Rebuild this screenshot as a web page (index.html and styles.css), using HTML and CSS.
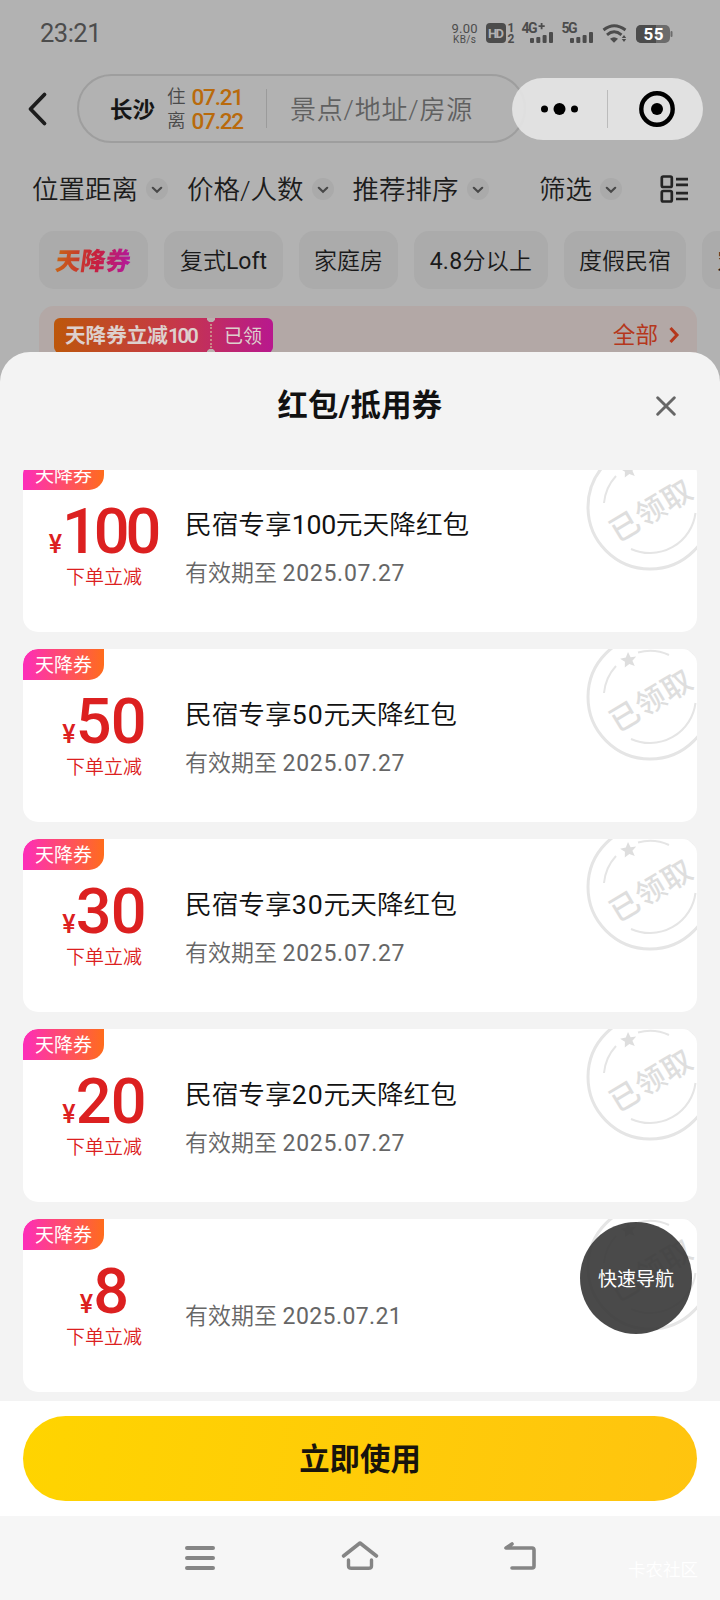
FILE: index.html
```
<!DOCTYPE html>
<html lang="zh-CN">
<head>
<meta charset="utf-8">
<title>红包/抵用券</title>
<link rel="stylesheet" href="styles.css">
</head>
<body>
<svg class="defs" width="0" height="0" aria-hidden="true">
  <symbol id="down" viewBox="0 0 22 22"><circle cx="11" cy="11" r="11" fill="#aaa"/><path d="M6.800 9.800l4.200 3.900 4.200-3.900" fill="none" stroke="#484848" stroke-width="2.200" stroke-linecap="round"/></symbol>
  <symbol id="stamp" viewBox="0 0 128 128">
    <circle cx="64" cy="64" r="62" fill="none" stroke="#e5e5e5" stroke-width="3"/>
    <g fill="none" stroke="#e5e5e5" stroke-width="2">
      <path d="M18 60A46 46 0 0 1 30 33"/><path d="M52 19.500A46 46 0 0 1 83 22"/><path d="M109.500 70A46 46 0 0 1 45 106"/>
    </g>
    <path transform="translate(.5 .5)" d="M41.500 18.500l2.600 5.200 5.600-.7-3.800 4.300 2.400 5.200-5.500-2-4.500 3.600.1-5.800-4.800-3.100 5.700-1.300z" fill="#dedede"/>
    <text class="stamp-text" transform="translate(65 67.500) rotate(-31)" y="10.500" text-anchor="middle">已领取</text>
  </symbol>
</svg>
<div class="phone">
  <header class="status">
    <span class="clock">23:21</span>
    <svg class="status-icons" viewBox="450 18 230 30">
      <g fill="#4c4c4c">
        <text x="451.500" y="32.500" class="net" textLength="26">9.00</text>
        <text x="453" y="42.500" class="unit" textLength="23">KB/s</text>
        <rect x="486" y="23" width="20" height="20" rx="4"/>
        <text x="488" y="38.200" class="hd" textLength="16">HD</text>
        <text x="507.500" y="32" class="sim">1</text><text x="507.500" y="43" class="sim">2</text>
        <text x="521.500" y="33" class="gen" textLength="16">4G</text>
        <path d="M538.500 25.200h2.200v-2.200h1.800v2.200h2.200v1.800h-2.200v2.200h-1.800v-2.200h-2.200z"/>
        <text x="561.500" y="33" class="gen" textLength="16">5G</text>
        <g id="bars"><rect x="530" y="38" width="4" height="5" rx="1"/><rect x="536.300" y="37" width="4" height="6" rx="1"/><rect x="542.600" y="35" width="4" height="8" rx="1"/><rect x="549" y="32" width="4" height="11" rx="1"/></g>
        <use href="#bars" x="40"/>
        <path d="M610 38.800q4-3 8 0l-4 4z"/>
        <path d="M624 35l2.200 3h-4.400zM624 42l2.200-3h-4.400z"/>
      </g>
      <g fill="none" stroke="#4c4c4c" stroke-width="2.900"><path d="M603.500 30q10.500-8.500 22 0"/><path d="M607 34.800q7-6 14.500 0"/></g>
      <rect x="636" y="25" width="34" height="18" rx="5" fill="#6c6c6c"/>
      <path d="M641 25h15v18h-15a5 5 0 0 1-5-5v-8a5 5 0 0 1 5-5z" fill="#4c4c4c"/>
      <rect x="670.500" y="31" width="2" height="6" rx="1" fill="#6c6c6c"/>
      <text x="643.500" y="40" class="batt" fill="#fff" textLength="20">55</text>
    </svg>
  </header>
  <div class="search-row">
    <svg class="back" viewBox="0 0 24 36"><path d="M18.500 3.500L4.500 18l14 14.500" fill="none" stroke="#1d1d1d" stroke-width="3.800" stroke-linecap="round" stroke-linejoin="round"/></svg>
    <div class="search">
      <b class="city">长沙</b>
      <div class="dates"><div>住<span>07.21</span></div><div>离<span>07.22</span></div></div>
      <div class="placeholder">景点/地址/房源</div>
    </div>
    <div class="capsule">
      <svg viewBox="0 0 191 62"><circle cx="32.500" cy="31" r="3.500"/><circle cx="47.500" cy="31" r="6"/><circle cx="62.500" cy="31" r="3.500"/><path d="M95.500 12v38" stroke="#bbb"/><circle cx="145" cy="31" r="15.700" fill="none" stroke="#000" stroke-width="4.400"/><circle cx="145" cy="31" r="6"/></svg>
    </div>
  </div>
  <nav class="filters">
    <div><span>位置距离</span><svg><use href="#down"/></svg></div>
    <div><span>价格/人数</span><svg><use href="#down"/></svg></div>
    <div><span>推荐排序</span><svg><use href="#down"/></svg></div>
    <div class="push"><span>筛选</span><svg><use href="#down"/></svg></div>
    <svg class="view" viewBox="0 0 28 28"><g fill="none" stroke="#252525" stroke-width="2.700"><rect x="1.800" y="1.500" width="10" height="10.500" rx="1.500"/><rect x="1.800" y="16" width="10" height="10.500" rx="1.500"/><path d="M16 4.200H28M16 9.800H28M16 18.200H28M16 24H28"/></g></svg>
  </nav>
  <div class="chips">
    <div class="chip sky"><b>天降券</b></div><div class="chip c2"><span>复式<em>Loft</em></span></div><div class="chip c3">家庭房</div><div class="chip c4"><span><em>4.8</em>分以上</span></div><div class="chip c5">度假民宿</div><div class="chip c6">宠物友好</div>
  </div>
  <div class="banner">
    <div class="ticket"><b>天降券立减<em>100</em></b><span>已领</span></div>
    <div class="all">全部<svg viewBox="0 0 12 18"><path d="M2.500 2l6.500 7-6.500 7" fill="none" stroke="#b5371c" stroke-width="3"/></svg></div>
  </div>
  <section class="sheet">
    <div class="sheet-head"><h1>红包/抵用券</h1><svg viewBox="0 0 20 20"><path d="M1.700 1.700l16.600 16.600M18.300 1.700L1.700 18.300" stroke="#666" stroke-width="2.900" stroke-linecap="round"/></svg></div>
    <div class="list">
      <article class="coupon"><span class="tag">天降券</span><div class="value"><p class="wide"><i>¥</i>100</p><small>下单立减</small></div><div class="info"><h2>民宿专享<em class="tight">100</em>元天降红包</h2><p>有效期至 <span>2025.07.27</span></p></div><svg class="stamp"><use href="#stamp"/></svg></article>
      <article class="coupon"><span class="tag">天降券</span><div class="value"><p><i>¥</i>50</p><small>下单立减</small></div><div class="info"><h2>民宿专享<em>50</em>元天降红包</h2><p>有效期至 <span>2025.07.27</span></p></div><svg class="stamp"><use href="#stamp"/></svg></article>
      <article class="coupon"><span class="tag">天降券</span><div class="value"><p><i>¥</i>30</p><small>下单立减</small></div><div class="info"><h2>民宿专享<em>30</em>元天降红包</h2><p>有效期至 <span>2025.07.27</span></p></div><svg class="stamp"><use href="#stamp"/></svg></article>
      <article class="coupon"><span class="tag">天降券</span><div class="value"><p><i>¥</i>20</p><small>下单立减</small></div><div class="info"><h2>民宿专享<em>20</em>元天降红包</h2><p>有效期至 <span>2025.07.27</span></p></div><svg class="stamp"><use href="#stamp"/></svg></article>
      <article class="coupon"><span class="tag">天降券</span><div class="value"><p><i>¥</i>8</p><small>下单立减</small></div><div class="info solo"><p>有效期至 <span class="tight">2025.07.21</span></p></div><svg class="stamp"><use href="#stamp"/></svg></article>
    </div>
    <div class="action"><button>立即使用</button></div>
    <div class="quick">快速导航</div>
  </section>
  <footer class="system">
    <svg viewBox="180 1536 360 42"><g fill="none" stroke="#858585" stroke-width="4" stroke-linecap="round" stroke-linejoin="round"><path d="M187 1548h26M187 1558h26M187 1568h26"/><path stroke-width="3.600" d="M343.500 1556l16.500-13 16.500 13"/><path stroke-width="3.400" d="M348.500 1560v6q0 2.300 3 2.300h17q3 0 3-2.300v-6"/><path stroke-width="3.600" d="M512 1544l-6 4h26q2 0 2 2v16q0 2-2 2h-20"/></g></svg>
    <span class="mark">卡农社区</span>
  </footer>
</div>
</body>
</html>
```
FILE: styles.css
```
* { box-sizing: border-box; }
body { margin: 0; font-family: Roboto, "Noto Sans CJK SC", sans-serif; font-weight: 350; }
h1, h2, p { margin: 0; }
em { font-style: normal; }
.defs { position: absolute; }
.phone { position: relative; display: flex; flex-direction: column; width: 720px; height: 1600px; overflow: hidden; background: #b2b2b2; }

.status { flex: none; height: 66px; display: flex; justify-content: space-between; padding: 18px 40px 0 40px; }
.clock { font-size: 25.5px; line-height: 30px; font-weight: 400; letter-spacing: -.5px; color: #4c4c4c; }
.status-icons { width: 230px; height: 30px; }
.net { font: 400 13px Roboto; }
.unit { font: 400 10px Roboto; }
.hd { font: 700 13px Roboto; fill: #b2b2b2; }
.sim { font: 700 12px Roboto; }
.gen { font: 700 14px Roboto; }
.batt { font: 700 17px Roboto; }

.search-row { position: relative; flex: none; height: 84px; display: flex; align-items: flex-start; padding: 8px 0 0 26px; }
.back { width: 24px; height: 36px; margin: 17px 27px 0 0; }
.search { width: 449px; height: 69px; border: 2px solid #9e9e9e; border-radius: 35px; display: flex; align-items: center; padding-left: 31px; }
.city { font-size: 22.5px; font-weight: 700; color: #161616; width: 57px; margin-top: -2px; }
.dates { width: 100px; height: 39px; border-right: 1.5px solid #9b9b9b; display: flex; flex-direction: column; justify-content: center; font-size: 18.5px; line-height: 24px; color: #4a4a4a; }
.dates div { display: flex; height: 24px; align-items: center; padding-top: 1px; }
.dates span { margin-left: 6px; color: #b96a0c; font-size: 22.5px; font-weight: 500; letter-spacing: -1.200px; }
.placeholder { margin: -2px 0 0 23px; font-size: 26px; letter-spacing: .8px; color: #606060; }
.capsule { position: absolute; left: 512px; top: 12px; width: 191px; height: 62px; border-radius: 31px; background: rgba(230,230,230,.9); }
.capsule svg { display: block; width: 191px; height: 62px; }

.filters { flex: none; height: 78px; display: flex; align-items: center; padding: 0 32px 0 32px; font-size: 26.5px; color: #1c1c1c; }
.filters div { display: flex; align-items: center; margin-right: 19px; white-space: nowrap; }
.filters div span { margin-top: -4px; }
.filters div svg { width: 22px; height: 22px; margin-left: 8px; }
.filters .push { margin: 0 38px 0 auto; }
.filters .view { width: 28px; height: 28px; }

.chips { flex: none; height: 58px; margin-top: 3px; display: flex; gap: 16px; padding-left: 39px; font-size: 23px; color: #1a1a1a; }
.chip { flex: none; height: 58px; padding-bottom: 3px; border-radius: 15px; background: #ababab; display: flex; align-items: center; justify-content: center; white-space: nowrap; }
.chip em { font-weight: 400; }
.sky { width: 109px; }
.sky b { margin-left: 3px; padding-right: 3px; font-size: 25px; font-weight: 900; transform: skewX(-8deg); background: linear-gradient(90deg, #c86414, #c8203c 50%, #b018a8); -webkit-background-clip: text; background-clip: text; color: transparent; }
.c2 { width: 119px; } .c3 { width: 99px; } .c4 { width: 134px; letter-spacing: .3px; } .c5 { width: 122px; }
.c6 { width: 122px; justify-content: flex-start; padding-left: 15px; }

.banner { flex: none; height: 80px; margin: 17px 23px 0 39px; border-radius: 15px; background: #b3a8a6; display: flex; justify-content: space-between; padding: 12px 17px 0 15px; }
.ticket { width: 219px; height: 35px; border-radius: 6px; display: flex; align-items: center; color: #ddd0cd; background: radial-gradient(circle at 157px 0, #bbb0ae 4px, transparent 4.5px), radial-gradient(circle at 157px 35px, #bbb0ae 4px, transparent 4.5px), linear-gradient(90deg, #bd570b, #c63848 55%, #b8188e); }
.ticket b { width: 158px; height: 24px; line-height: 24px; padding-left: 11px; border-right: 2px dotted #c88; font-size: 20.6px; font-weight: 700; white-space: nowrap; }
.ticket em { font-weight: 600; letter-spacing: -2.300px; }
.ticket span { margin: -2px 0 0 12px; font-size: 19px; font-weight: 400; }
.all { height: 31px; display: flex; align-items: center; font-size: 22.6px; font-weight: 400; color: #b5371c; }
.all svg { width: 12px; height: 18px; margin: 3px 0 0 10px; }

.sheet { position: absolute; left: 0; right: 0; top: 352px; height: 1164px; border-radius: 30px 30px 0 0; background: #f3f3f3; overflow: hidden; }
.sheet-head { height: 118px; display: grid; grid-template-columns: 1fr auto 1fr; padding-top: 34px; }
h1 { grid-column: 2; font-size: 30.3px; line-height: 40px; letter-spacing: .4px; font-weight: 700; color: #111; }
.sheet-head svg { width: 20px; height: 20px; justify-self: end; margin: 10px 44px 0 0; }
.list { height: 931px; overflow: hidden; padding: 0 23px; }
.coupon { position: relative; display: flex; height: 173px; margin-bottom: 17px; border-radius: 15px; background: #fff; overflow: hidden; }
.coupon:first-child { margin-top: -11px; }
.tag { position: absolute; left: 0; top: 0; width: 81px; height: 31px; line-height: 33px; padding-left: 12px; border-radius: 15px 0 15px 0; background: linear-gradient(90deg, #fd2dba, #ff6c1c); color: #fff; font-size: 19px; font-weight: 400; }
.value { width: 162px; padding-top: 40px; text-align: center; color: #dc2020; }
.value p { height: 66px; line-height: 66px; font-size: 63px; font-weight: 500; letter-spacing: -.8px; white-space: nowrap; }
.value .wide { padding-right: 2px; letter-spacing: -4px; }
.value i { font-size: 25px; font-style: normal; letter-spacing: 0; }
.value small { display: block; font-size: 19px; line-height: 26px; }
.info { padding-top: 46px; white-space: nowrap; }
h2 { height: 40px; line-height: 40px; font-size: 26.7px; font-weight: 350; color: #111; }
h2 em { font-weight: 400; letter-spacing: .9px; }
h2 .tight { letter-spacing: -.3px; }
.info p { margin-top: 13px; line-height: 32px; font-size: 23px; color: #666; }
.info p span { font-weight: 400; letter-spacing: .7px; }
.info p .tight { letter-spacing: .4px; }
.info.solo { padding-top: 69px; }
.stamp { position: absolute; left: 563px; top: -16px; width: 128px; height: 128px; }
.stamp-text { font: 500 29.5px "Noto Sans CJK SC"; letter-spacing: .8px; fill: #dedede; }
.action { height: 115px; background: #fff; padding: 15px 23px; }
button { display: block; width: 100%; height: 85px; padding: 0 0 4px; border: 0; border-radius: 43px; background: linear-gradient(100deg, #ffd400, #ffc40f); font: 700 30.4px "Noto Sans CJK SC"; color: #18140c; }
.quick { position: absolute; left: 580px; top: 870px; width: 112px; height: 112px; border-radius: 50%; background: rgba(56,56,56,.91); color: #fff; font-size: 19px; font-weight: 400; line-height: 116px; text-align: center; }

.system { position: absolute; left: 0; right: 0; bottom: 0; height: 84px; background: #f6f6f6; display: flex; justify-content: space-between; padding: 20px 22px 0 180px; }
.system svg { width: 360px; height: 42px; }
.mark { color: #fff; font-size: 17.5px; margin-top: 20px; }
```
